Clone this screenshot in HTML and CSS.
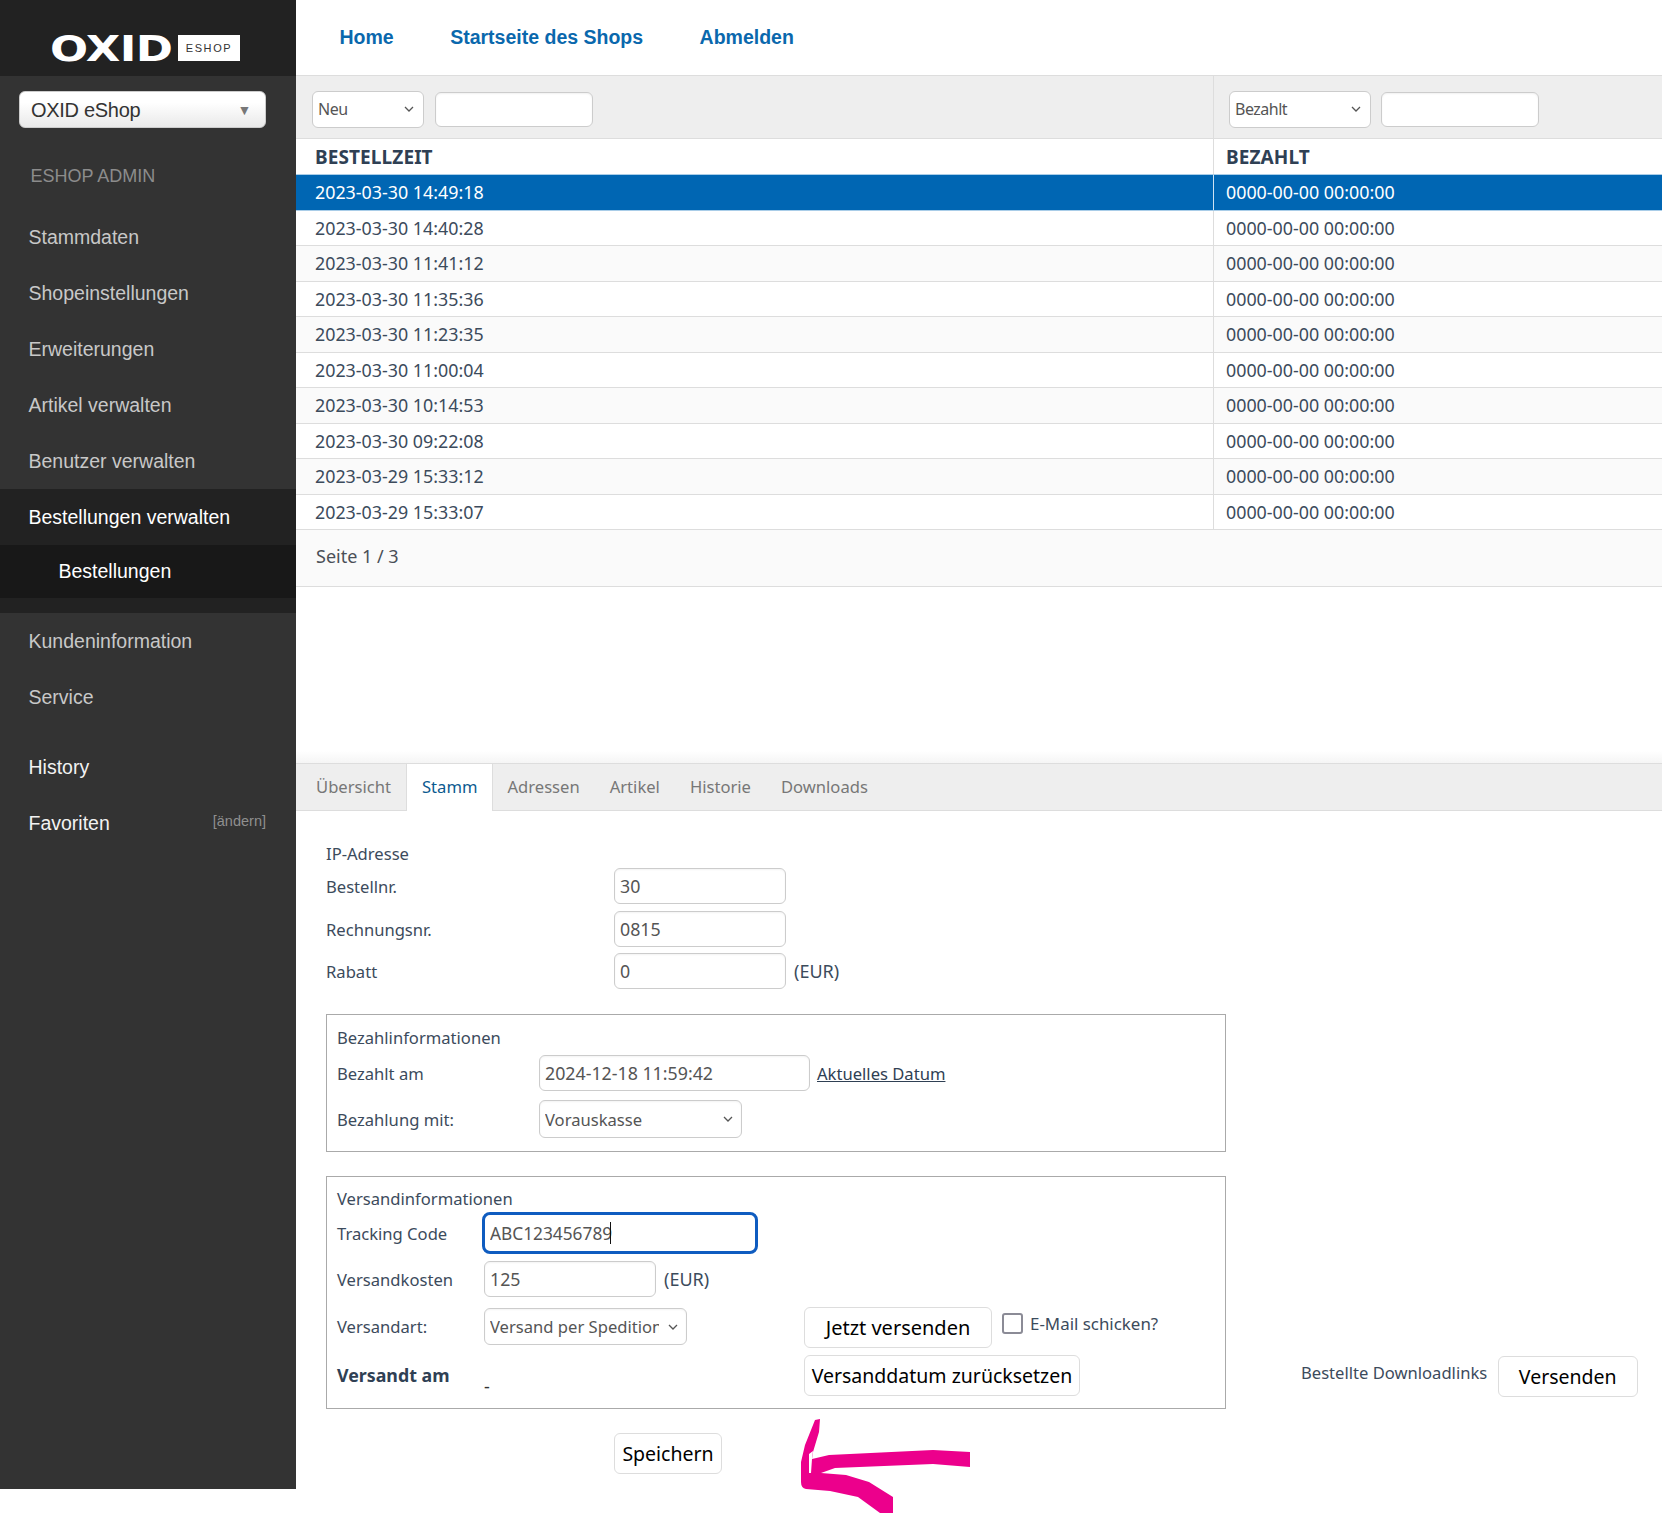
FILE: index.html
```html
<!DOCTYPE html>
<html lang="de">
<head>
<meta charset="utf-8">
<title>OXID eShop Admin</title>
<link rel="stylesheet" href="styles.css">
</head>
<body>
<div class="page">
  <aside class="sidebar">
    <div class="brand"><span class="brand-box"><span class="brand-name">OXID</span></span><span class="brand-tag">ESHOP</span></div>
    <div class="shop-wrap">
      <div class="shop-select"><span class="shop-name">OXID eShop</span><span class="shop-arrow">▼</span></div>
    </div>
    <div class="admin-title">ESHOP ADMIN</div>
    <nav class="menu">
      <a class="menu-item">Stammdaten</a>
      <a class="menu-item">Shopeinstellungen</a>
      <a class="menu-item">Erweiterungen</a>
      <a class="menu-item">Artikel verwalten</a>
      <a class="menu-item">Benutzer verwalten</a>
      <div class="menu-group">
        <a class="menu-item active">Bestellungen verwalten</a>
        <a class="menu-sub">Bestellungen</a>
      </div>
      <a class="menu-item">Kundeninformation</a>
      <a class="menu-item">Service</a>
      <a class="menu-item light history">History</a>
      <div class="menu-item light fav"><span>Favoriten</span><span class="fav-edit">[ändern]</span></div>
    </nav>
  </aside>

  <main class="main">
    <header class="topnav">
      <a>Home</a>
      <a>Startseite des Shops</a>
      <a>Abmelden</a>
    </header>

    <section class="list">
      <div class="grid filter">
        <div class="filter-cell">
          <select class="filter-select neu"><option>Neu</option></select>
          <input class="filter-input first" type="text">
        </div>
        <div class="filter-cell second">
          <select class="filter-select bez"><option>Bezahlt</option></select>
          <input class="filter-input" type="text">
        </div>
      </div>
      <div class="grid head"><div>BESTELLZEIT</div><div>BEZAHLT</div></div>
      <div class="grid row selected"><div>2023-03-30 14:49:18</div><div>0000-00-00 00:00:00</div></div>
      <div class="grid row"><div>2023-03-30 14:40:28</div><div>0000-00-00 00:00:00</div></div>
      <div class="grid row alt"><div>2023-03-30 11:41:12</div><div>0000-00-00 00:00:00</div></div>
      <div class="grid row"><div>2023-03-30 11:35:36</div><div>0000-00-00 00:00:00</div></div>
      <div class="grid row alt"><div>2023-03-30 11:23:35</div><div>0000-00-00 00:00:00</div></div>
      <div class="grid row"><div>2023-03-30 11:00:04</div><div>0000-00-00 00:00:00</div></div>
      <div class="grid row alt"><div>2023-03-30 10:14:53</div><div>0000-00-00 00:00:00</div></div>
      <div class="grid row"><div>2023-03-30 09:22:08</div><div>0000-00-00 00:00:00</div></div>
      <div class="grid row alt"><div>2023-03-29 15:33:12</div><div>0000-00-00 00:00:00</div></div>
      <div class="grid row"><div>2023-03-29 15:33:07</div><div>0000-00-00 00:00:00</div></div>
      <div class="pager">Seite 1 / 3</div>
    </section>

    <div class="spacer"></div>

    <section class="tabs">
      <span class="tab">Übersicht</span>
      <span class="tab current">Stamm</span>
      <span class="tab">Adressen</span>
      <span class="tab">Artikel</span>
      <span class="tab">Historie</span>
      <span class="tab">Downloads</span>
    </section>

    <section class="form">
      <div class="ip">IP-Adresse</div>
      <div class="frow first-row"><label class="flabel">Bestellnr.</label><input class="field" type="text" value="30"></div>
      <div class="frow gap6"><label class="flabel">Rechnungsnr.</label><input class="field" type="text" value="0815"></div>
      <div class="frow gap7"><label class="flabel">Rabatt</label><input class="field" type="text" value="0"><span class="unit">(EUR)</span></div>

      <fieldset class="box box-pay">
        <div class="box-title">Bezahlinformationen</div>
        <div class="brow pay"><label class="blabel wide">Bezahlt am</label><input class="field date" type="text" value="2024-12-18 11:59:42"><a class="today">Aktuelles Datum</a></div>
        <div class="brow pay2"><label class="blabel wide">Bezahlung mit:</label><select class="field pick sel-pay"><option>Vorauskasse</option></select></div>
      </fieldset>

      <div class="ship-line">
        <fieldset class="box box-ship">
          <div class="ship-grid">
            <div class="ship-left">
              <div class="box-title tight">Versandinformationen</div>
              <div class="brow track"><label class="blabel narrow">Tracking Code</label><span class="focus-wrap"><input class="field tracking" type="text" value="ABC123456789"><span class="caret"></span></span></div>
              <div class="brow cost"><label class="blabel narrow">Versandkosten</label><input class="field small" type="text" value="125"><span class="unit">(EUR)</span></div>
              <div class="brow kind"><label class="blabel narrow">Versandart:</label><select class="field pick sel-ship"><option>Versand per Spedition</option></select></div>
              <div class="brow sent"><label class="blabel narrow strong">Versandt am</label><span class="dash">-</span></div>
            </div>
            <div class="ship-right">
              <div class="send-row">
                <button class="btn b-send" type="button">Jetzt versenden</button>
                <label class="mail"><span class="check"></span>E-Mail schicken?</label>
              </div>
              <button class="btn b-reset" type="button">Versanddatum zurücksetzen</button>
            </div>
          </div>
        </fieldset>
        <div class="downloads"><span class="dl-label">Bestellte Downloadlinks</span><button class="btn b-dl" type="button">Versenden</button></div>
      </div>
      <button class="btn b-save" type="button">Speichern</button>
    </section>
  </main>

  <svg class="arrow" width="190" height="110" viewBox="790 1410 190 110" aria-hidden="true">
    <path fill="#ec008c" d="M815 1420 L820 1419 L819 1432 L813 1452 L812 1459 L829 1455 L933 1450 L970 1452 L970 1467 L933 1464 L835 1468 L821 1473 L846 1475 L869 1482 L893 1497 L893 1513 L880 1513 L858 1497 L830 1491 L806 1489 Q801 1488 801 1482 L801 1462 L805 1445 Z"/>
    <path fill="#fff" d="M809 1454 L813 1451 L812 1459 L811 1473 L809 1473 Z"/>
  </svg>
</div>
</body>
</html>
```
FILE: styles.css
```css
* { box-sizing: border-box; }
html, body { margin: 0; padding: 0; background: #fff; }
body { font-family: "Noto Sans", "DejaVu Sans", sans-serif; font-size: 16.6px; color: #3c4b5c; }
.page { position: relative; display: flex; align-items: flex-start; width: 1662px; height: 1513px; overflow: hidden; }

/* sidebar */
.sidebar { flex: 0 0 296px; height: 1489px; background: #333; font-family: "Liberation Sans", Arial, sans-serif; }
.brand { height: 76px; background: #222; display: flex; align-items: flex-end; padding: 0 0 15px 50px; gap: 6px; }
.brand-box { display: block; width: 122px; height: 26px; }
.brand-name { display: block; font-family: "DejaVu Sans", sans-serif; font-weight: 700; font-size: 35px; line-height: 28px; height: 26px; color: #fff; letter-spacing: -0.5px; transform: scaleX(1.28); transform-origin: left center; }
.brand-tag { width: 62px; height: 26px; background: #fff; color: #333; font-size: 11px; letter-spacing: 1.6px; display: flex; align-items: center; justify-content: center; }
.shop-wrap { padding: 15px 30px 0 19px; }
.shop-select { height: 37px; border-radius: 6px; background: linear-gradient(#fff 30%, #e9e9e9); border: 1px solid #ccc; display: flex; align-items: center; justify-content: space-between; padding: 0 14px 0 11px; color: #333; font-size: 20px; letter-spacing: -0.3px; }
.shop-name { padding-top: 2px; }
.shop-arrow { font-size: 14px; color: #777; }
.admin-title { margin: 37px 0 0 30.5px; font-size: 18px; line-height: 22px; color: #8c8c8c; height: 22px; }
.menu { display: flex; flex-direction: column; margin-top: 21.5px; }
.menu-item { display: block; height: 56px; line-height: 56px; padding-left: 28.5px; font-size: 19.5px; color: #c8c8c8; }
.menu-group { background: #222; height: 124px; }
.menu-item.active { color: #fff; }
.menu-sub { display: block; height: 53px; line-height: 53px; padding-left: 58.5px; font-size: 19.5px; color: #fff; background: #181818; }
.menu-item.light { color: #f2f2f2; }
.history { margin-top: 14px; }
.fav { display: flex; justify-content: space-between; padding-right: 30px; }
.fav-edit { font-size: 14.5px; color: #8f8f8f; line-height: 52px; }

/* main */
.main { flex: 1; min-width: 0; display: flex; flex-direction: column; }
.topnav { height: 75px; display: flex; gap: 56.5px; align-items: center; padding-left: 43.5px; }
.topnav a { font-family: "Liberation Sans", Arial, sans-serif; font-weight: 700; font-size: 19.5px; color: #0a68ad; }

.grid { display: grid; grid-template-columns: 917px 1fr; }
.filter { height: 64px; background: #eee; border-top: 1px solid #ddd; border-bottom: 1px solid #ddd; }
.filter-cell { display: flex; align-items: center; padding: 4px 0 0 16px; gap: 12px; }
.filter-cell.second { border-left: 1px solid #ddd; padding-left: 15px; gap: 10px; }
.filter-select { appearance: none; -webkit-appearance: none; height: 37px; border: 1px solid #ccc; border-radius: 6px; background: #fff url("data:image/svg+xml,%3Csvg xmlns='http://www.w3.org/2000/svg' width='10' height='6' viewBox='0 0 10 6'%3E%3Cpath d='M1 1l4 4 4-4' fill='none' stroke='%23555' stroke-width='1.3'/%3E%3C/svg%3E") no-repeat right 9px center; color: #555; font-family: "Noto Sans", sans-serif; font-size: 16px; letter-spacing: -0.5px; padding: 0 5px; }
.neu { width: 112px; }
.bez { width: 142px; }
.filter-input { height: 35px; width: 158px; border: 1px solid #ccc; border-radius: 6px; background: #fff; box-shadow: inset 0 1px 2px rgba(0,0,0,.06); }
.filter-input.first { margin-left: -1px; }

.head { height: 35px; line-height: 37px; font-weight: 700; color: #2f4054; font-size: 19px; letter-spacing: .1px; }
.head > div, .row > div { padding-left: 19px; }
.head > div + div, .row > div + div { padding-left: 12px; border-left: 1px solid #ddd; }
.row { height: 35.5px; line-height: 34px; border-top: 1px solid #ddd; font-size: 17.85px; color: #3c4b5c; background: #fff; }
.row.alt { background: #fafafa; }
.row.selected { background: #0066b3; color: #fff; border-top: 1px solid #a9cde8; box-shadow: 0 1px 0 #a9cde8; position: relative; }
.row.selected > div + div { border-left-color: #cfe3f3; }
.pager { height: 58px; line-height: 52px; border-top: 1px solid #ddd; border-bottom: 1px solid #ddd; background: #fafafa; padding-left: 20px; font-size: 18px; color: #4a4f57; }
.spacer { height: 176px; background: linear-gradient(to bottom, #fff 164px, #f5f5f5 100%); }

/* tabs */
.tabs { height: 48px; background: #eee; border-top: 1px solid #ddd; border-bottom: 1px solid #ddd; display: flex; padding-left: 5px; }
.tab { padding: 0 15px; line-height: 45px; color: #777; font-size: 16.6px; }
.tab.current { background: #fff; color: #0b5a8f; border-left: 1px solid #ddd; border-right: 1px solid #ddd; height: 47px; margin: 0 -1px 0 0; }

/* form */
.form { padding: 32px 0 0 30px; }
.ip { height: 22px; line-height: 22px; margin-bottom: 0; }
.frow { display: flex; align-items: center; height: 36px; margin-top: 4px; }
.frow.first-row { margin-top: 3px; }
.frow.gap6 { margin-top: 7px; }
.frow.gap7 { margin-top: 6px; }
.flabel { width: 288px; }
.field { height: 36px; width: 172px; border: 1px solid #ccc; border-radius: 6px; background: #fff; color: #555; font-family: "Noto Sans", sans-serif; font-size: 17.8px; padding: 0 5px; box-shadow: inset 0 1px 2px rgba(0,0,0,.05); }
.pick { appearance: none; -webkit-appearance: none; font-size: 16.6px; background: #fff url("data:image/svg+xml,%3Csvg xmlns='http://www.w3.org/2000/svg' width='10' height='6' viewBox='0 0 10 6'%3E%3Cpath d='M1 1l4 4 4-4' fill='none' stroke='%23555' stroke-width='1.3'/%3E%3C/svg%3E") no-repeat right 8px center; }
.unit { margin-left: 8px; font-size: 18px; }
.box { display: block; margin: 25px 0 0; padding: 0 0 0 10px; width: 900px; border: 1px solid #aaa; min-width: 0; }
.box-pay { height: 138px; }
.box-title { height: 22px; line-height: 22px; margin-top: 12px; }
.brow { display: flex; align-items: center; }
.blabel { flex: none; }
.blabel.wide { width: 202px; }
.blabel.narrow { width: 147px; }
.pay { margin-top: 6px; }
.pay2 { margin-top: 9px; }
.date { width: 271px; }
.today { margin-left: 7px; color: #2f4054; text-decoration: underline; }
.sel-pay { width: 203px; height: 38px; }
.ship-line { display: flex; align-items: flex-end; margin-top: 24px; }
.box-ship { margin: 0; height: 233px; flex: none; }
.ship-grid { display: flex; }
.ship-left { width: 467px; flex: none; }
.box-title.tight { margin-top: 11px; }
.track { margin-top: 2px; height: 42px; }
.track .blabel { width: 145px; }
.focus-wrap { position: relative; display: block; }
.tracking { display: block; width: 276px; height: 42px; border: 3px solid #0f5cc0; border-radius: 8px; padding: 0 5px; box-shadow: none; outline: none; font-size: 17.3px; }
.caret { position: absolute; left: 128px; top: 10px; width: 1px; height: 22px; background: #111; }
.cost { margin-top: 7px; }
.small { width: 172px; }
.kind { margin-top: 11px; }
.sel-ship { width: 203px; height: 37px; padding-right: 27px; }
.sent { margin-top: 12px; height: 36px; }
.strong { font-weight: 700; color: #2f4054; font-size: 17.8px; }
.dash { color: #333; padding-top: 22px; font-size: 18px; }
.ship-right { padding-top: 130px; display: flex; flex-direction: column; gap: 7px; align-items: flex-start; }
.send-row { display: flex; align-items: flex-start; gap: 10px; }
.btn { height: 41px; border: 1px solid #ddd; border-radius: 6px; background: #fff; color: #000; font-family: "Noto Sans", sans-serif; font-size: 19.5px; padding: 0; }
.b-send { width: 188px; font-size: 20px; }
.b-reset { width: 276px; }
.mail { display: flex; align-items: center; gap: 7px; padding-top: 5px; font-size: 16.9px; }
.check { width: 21px; height: 21px; border: 2px solid #8b8b96; border-radius: 3px; display: block; background: #fff; }
.downloads { display: flex; align-items: flex-start; margin: 0 0 12px 75px; gap: 10.5px; }
.dl-label { padding-top: 5px; }
.b-dl { width: 140px; }
.b-save { display: block; width: 108px; margin: 24px 0 0 288px; }

.arrow { position: absolute; left: 790px; top: 1410px; }
```
